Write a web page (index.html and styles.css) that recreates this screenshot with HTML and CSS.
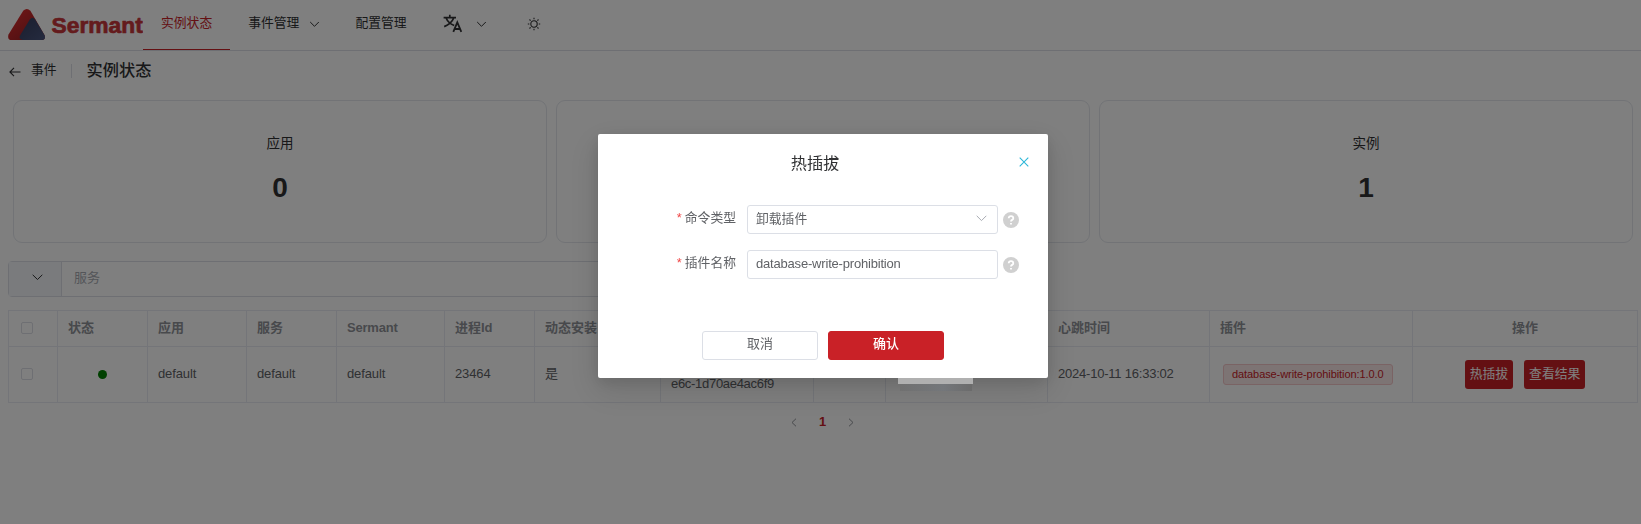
FILE: index.html
```
<!DOCTYPE html>
<html lang="zh-CN">
<head>
<meta charset="utf-8">
<title>Sermant</title>
<link rel="stylesheet" href="styles.css">
</head>
<body>
<header class="nav">
  <svg class="logo" width="135" height="50" viewBox="0 0 135 50">
    <defs>
      <linearGradient id="red" x1="0" y1="0" x2="1" y2="1"><stop offset="0" stop-color="#e8302f"/><stop offset="1" stop-color="#8c1c22"/></linearGradient>
      <linearGradient id="blue" x1="0" y1="0" x2="1" y2="1"><stop offset="0" stop-color="#343c5c"/><stop offset="1" stop-color="#4a567f"/></linearGradient>
    </defs>
    <path d="M15.200 10.800Q18.800 7.200 22.400 10.800L36.500 35Q38 40 33.500 40H3.500Q-1 40 .5 34.500Z" fill="url(#red)"/>
    <path d="M21.800 19.500Q24.500 16 27.200 19.500L36.700 35.500Q38 40 33.500 40H14.500Q10.500 39 12 35.500Z" fill="url(#blue)"/>
    <text class="logo-text" x="43.500" y="32.600">Sermant</text>
  </svg>
  <a class="nav-item active">实例状态</a>
  <a class="nav-item">事件管理<svg class="chev" width="11" height="7" viewBox="0 0 11 7"><path d="M1.200 1L5.500 5.300L9.800 1"/></svg></a>
  <a class="nav-item config">配置管理</a>
  <a class="nav-item lang"><svg width="20" height="20" viewBox="0 0 20 20"><path d="M.6 4.600H13M6.800 1.800V4.600M3 4.800Q5 10 11.200 12.500M10.800 4.800Q8.500 10.800 1.200 13.600" fill="none" stroke="#303133" stroke-width="1.700"/><path d="M10.300 18.900L14.300 9.300L18.300 18.900M11.800 16H17" fill="none" stroke="#303133" stroke-width="1.800"/></svg><svg class="chev" width="11" height="7" viewBox="0 0 11 7"><path d="M1.200 1L5.500 5.300L9.800 1"/></svg></a>
  <a class="nav-item sun"><svg width="14" height="14" viewBox="0 0 14 14" fill="none" stroke="#303133" stroke-width="1.100"><circle cx="7" cy="7" r="3.200"/><path d="M7 .8V2.300M7 11.700V13.200M.8 7H2.300M11.700 7H13.200M2.500 2.500L3.600 3.600M10.400 10.400L11.500 11.500M2.500 11.500L3.600 10.400M10.400 3.600L11.500 2.500"/></svg></a>
</header>

<main class="page">
  <div class="crumb">
    <svg width="12" height="10" viewBox="0 0 12 10" fill="none" stroke="#303133" stroke-width="1.100"><path d="M5 .8L.9 5L5 9.200M.9 5H11.500"/></svg>
    <span class="back">事件</span>
    <i class="bar"></i>
    <h1>实例状态</h1>
  </div>

  <section class="cards">
    <div class="card"><span>应用</span><strong>0</strong></div>
    <div class="card"></div>
    <div class="card"><span>实例</span><strong>1</strong></div>
  </section>

  <div class="search">
    <div class="prepend"><svg class="chev" width="11" height="7" viewBox="0 0 11 7"><path d="M.7 .8L5.500 5.500L10.300 .8"/></svg></div>
    <div class="field">服务</div>
  </div>

  <div class="table">
    <div class="row head">
      <div class="cell check"><i class="box"></i></div>
      <div class="cell">状态</div><div class="cell">应用</div><div class="cell">服务</div>
      <div class="cell"><span class="latin">Sermant</span></div><div class="cell">进程Id</div><div class="cell">动态安装</div>
      <div class="cell"></div><div class="cell"></div><div class="cell"></div>
      <div class="cell">心跳时间</div><div class="cell">插件</div><div class="cell center">操作</div>
    </div>
    <div class="row body">
      <div class="cell check"><i class="box"></i></div>
      <div class="cell center"><i class="dot"></i></div>
      <div class="cell">default</div><div class="cell">default</div><div class="cell">default</div>
      <div class="cell">23464</div><div class="cell">是</div>
      <div class="cell uid"><span>e6c-1d70ae4ac6f9</span></div><div class="cell"></div><div class="cell"></div>
      <div class="cell"><span class="time">2024-10-11 16:33:02</span></div>
      <div class="cell tagcell"><span class="tag">database-write-prohibition:1.0.0</span></div>
      <div class="cell center actions"><button class="act">热插拔</button><button class="act">查看结果</button></div>
    </div>
  </div>

  <div class="pager">
    <svg width="6" height="9" viewBox="0 0 6 9"><path d="M5 .7L1 4.500L5 8.300"/></svg>
    <b>1</b>
    <svg width="6" height="9" viewBox="0 0 6 9"><path d="M1 .7L5 4.500L1 8.300"/></svg>
  </div>
</main>

<div class="overlay">
  <div class="masked"><i class="m1"></i><i class="m2"></i></div>
  <div class="dialog">
    <div class="dialog-head">
      <h2>热插拔</h2>
      <svg width="10" height="10" viewBox="0 0 10 10" fill="none" stroke="#2db7d8" stroke-width="1.100"><path d="M.7 .7L9.300 9.300M9.300 .7L.7 9.300"/></svg>
    </div>
    <div class="form">
      <div class="line">
        <label><em>*</em>命令类型</label>
        <div class="input"><span>卸载插件</span><svg width="11" height="7" viewBox="0 0 11 7" fill="none" stroke="#a8abb2"><path d="M.7 .8L5.500 5.600L10.300 .8"/></svg></div>
        <svg class="help" width="16" height="16" viewBox="0 0 16 16"><circle cx="8" cy="8" r="8" fill="#d0d0d0"/><path d="M5.700 6.300Q5.800 4.200 8 4.200Q10.300 4.200 10.300 6.200Q10.300 7.300 9.100 7.900Q8 8.500 8 9.600M8 10.900V12.400" fill="none" stroke="#fff" stroke-width="1.800"/></svg>
      </div>
      <div class="line">
        <label><em>*</em>插件名称</label>
        <div class="input"><span class="value">database-write-prohibition</span></div>
        <svg class="help" width="16" height="16" viewBox="0 0 16 16"><circle cx="8" cy="8" r="8" fill="#d0d0d0"/><path d="M5.700 6.300Q5.800 4.200 8 4.200Q10.300 4.200 10.300 6.200Q10.300 7.300 9.100 7.900Q8 8.500 8 9.600M8 10.900V12.400" fill="none" stroke="#fff" stroke-width="1.800"/></svg>
      </div>
    </div>
    <div class="buttons"><button>取消</button><button class="primary">确认</button></div>
  </div>
</div>
</body>
</html>
```

FILE: styles.css
```
* { box-sizing: border-box; }
body {
  margin: 0;
  height: 524px;
  overflow: hidden;
  background: #fff;
  color: #303133;
  font: 13px/18px "Liberation Sans", "Noto Sans CJK SC", sans-serif;
}
button { font: inherit; }
h1, h2 { margin: 0; font-weight: 400; }

.nav { display: flex; height: 51px; padding-left: 8px; border-bottom: 1px solid #dcdfe6; }
.logo { flex: none; }
.logo-text { font: 700 22.800px "Liberation Sans", sans-serif; fill: #c8373a; stroke: #c8373a; stroke-width: .7px; stroke-linejoin: round; }
.nav-item { display: flex; align-items: center; height: 50px; padding: 0 18px 4px; font-size: 12.800px; }
.nav-item.active { color: #c92127; border-bottom: 1px solid #c92127; padding-bottom: 3px; }
.chev { fill: none; stroke: #303133; stroke-width: 1; }
.nav-item .chev { margin: 3px 0 0 10px; }
.config { padding-left: 17px; }
.lang { padding-left: 18px; }
.lang .chev { margin-left: 13px; }
.sun { padding: 0 0 3px 22px; }

.page { padding: 0 4px 0 8px; }
.crumb { display: flex; align-items: center; height: 40px; padding-left: 2px; }
.crumb svg { margin: 1px 0 0 -1px; }
.back { margin-left: 10px; font-size: 12.800px; padding-bottom: 3px; }
.bar { width: 1px; height: 14px; margin: 0 15px 0 14px; background: #dcdfe6; }
.crumb h1 { font-size: 16.200px; font-weight: 500; padding-bottom: 3px; }

.cards { display: grid; grid-template-columns: repeat(3, 1fr); gap: 9px; margin: 9px 4px 0 5px; }
.card { height: 143px; border: 1px solid #e4e7ed; border-radius: 9px; display: flex; flex-direction: column; align-items: center; padding-top: 34px; }
.card span { font-size: 13.500px; }
.card strong { font-size: 28px; line-height: 32px; margin-top: 19px; }

.search { display: flex; width: 800px; height: 36px; margin-top: 18px; border: 1px solid #dcdfe6; border-radius: 4px; }
.prepend { display: flex; align-items: center; justify-content: center; width: 53px; padding: 0 0 3px 4px; background: #f5f7fa; border-right: 1px solid #dcdfe6; }
.field { padding: 7px 12px; color: #a8abb2; }

.table { margin-top: 13px; border: 1px solid #e8ebf2; border-width: 1px 0 0 1px; width: 1630px; }
.row { display: grid; grid-template-columns: 49px 90px 99px 90px 108px 90px 126px 153px 72px 162px 162px 203px 1fr; }
.cell { display: flex; align-items: center; padding: 0 0 2px 10px; border: 1px solid #e8ebf2; border-width: 0 1px 1px 0; white-space: nowrap; }
.head { height: 36px; color: #909399; font-weight: 700; }
.body { height: 56px; color: #606266; }
.body .cell { padding-bottom: 2px; letter-spacing: -.12px; }
.cell.center { justify-content: center; padding-left: 0; }
.latin { letter-spacing: -.2px; }
.row .check { padding: 0 0 2px 12px; }
.box { width: 12px; height: 12px; border: 1px solid #dcdfe6; border-radius: 2px; }
.dot { width: 9px; height: 9px; margin-top: 2px; border-radius: 50%; background: #008000; }
.body .uid { align-items: flex-end; padding-bottom: 9px; }
.body .uid span { letter-spacing: -.3px; }
.time { letter-spacing: -.22px; }
.body .tagcell { padding: 0 0 0 13px; }
.tag { height: 21px; padding: 0 8px; font-size: 11px; line-height: 19px; letter-spacing: -.08px; color: #c92127; background: #fae9e9; border: 1px solid #f4c6c8; border-radius: 3px; }
.body .actions { gap: 11px; padding: 0; letter-spacing: 0; }
.act { height: 29px; padding: 0 5px 2px; border: 0; border-radius: 3px; background: #c92127; color: #fff; font-size: 12.800px; }

.pager { display: flex; align-items: center; justify-content: center; gap: 22px; height: 18px; margin-top: 10px; color: #c92127; }
.pager b { padding-bottom: 1px; }
.pager svg { fill: none; stroke: #909399; }

.overlay { position: fixed; inset: 0; padding-top: 134px; background: rgba(0, 0, 0, .5); }
.masked i { position: absolute; z-index: 1; }
.m1 { left: 898px; top: 378px; width: 75px; height: 6px; background: #b0b0b0; }
.m2 { left: 900px; top: 384px; width: 72px; height: 7px; background: linear-gradient(90deg, #707070, #74777b 60%, #6b6b6b); }
.dialog {
  position: relative;
  width: 450px;
  height: 244px;
  margin-left: 598px;
  background: #fff;
  border-radius: 2px;
  box-shadow: 0 12px 32px 4px rgba(0, 0, 0, .1), 0 4px 16px rgba(0, 0, 0, .12);
}
.dialog-head { display: flex; align-items: center; height: 57px; padding-right: 19px; }
.dialog-head svg { margin-bottom: 1px; }
.dialog-head h2 { flex: 1; padding-left: 13px; text-align: center; font-size: 16.200px; }
.form { display: grid; gap: 16px; padding-top: 14px; color: #606266; }
.line { display: flex; align-items: center; height: 29px; }
.line label { width: 149px; padding: 0 11px 3px 0; text-align: right; font-size: 12.800px; }
.line em { color: #f04848; font-style: normal; margin-right: 3px; }
.input { display: flex; align-items: center; justify-content: space-between; width: 251px; height: 29px; padding: 0 10px 2px 8px; border: 1px solid #dcdfe6; border-radius: 3px; font-size: 12.800px; }
.value { font-size: 13px; letter-spacing: -.19px; }
.help { margin: 1px 0 0 5px; }
.buttons { display: flex; gap: 10px; padding: 52px 0 0 104px; }
.buttons button { width: 116px; height: 29px; padding: 0 0 3px; border: 1px solid #dcdfe6; border-radius: 3px; background: #fff; color: #606266; }
.buttons .primary { border-color: #c92127; background: #c92127; color: #fff; font-weight: 500; }
```
